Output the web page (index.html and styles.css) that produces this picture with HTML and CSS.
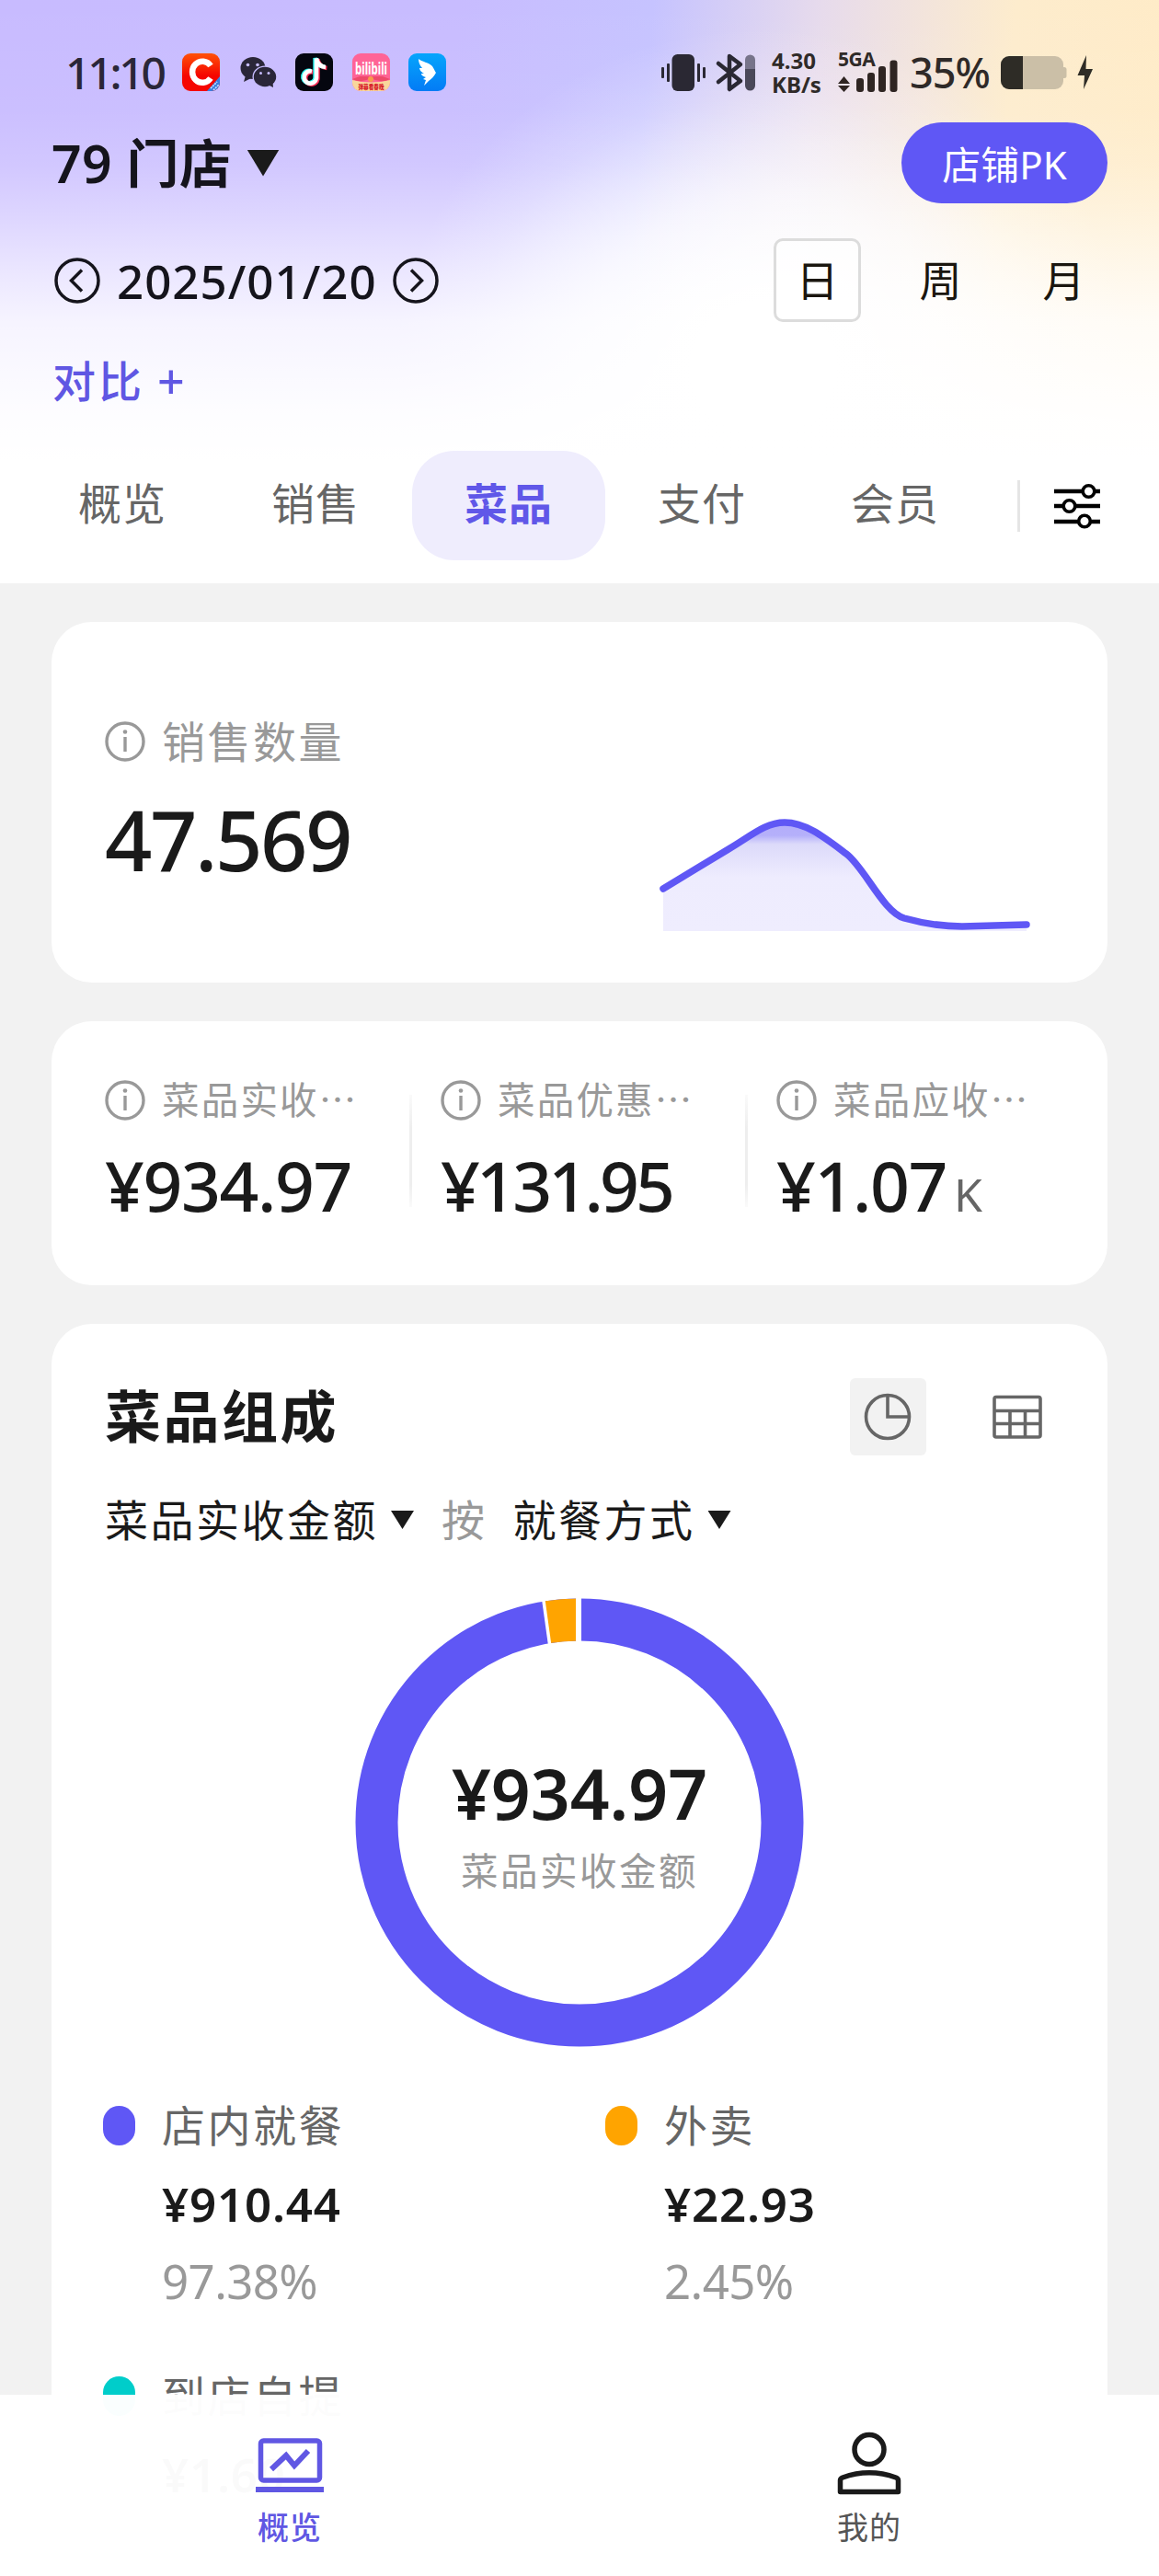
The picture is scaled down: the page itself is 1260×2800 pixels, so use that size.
FILE: index.html
```
<!DOCTYPE html>
<html lang="zh-CN">
<head>
    <meta charset="UTF-8">
    <meta name="viewport" content="width=device-width, initial-scale=1.0">
    <title>菜品概览</title>
    <link rel="stylesheet" href="styles.css">
</head>
<body>
    <header class="header">
        <!-- Status bar -->
        <div class="status-bar">
            <div class="status-left">
                <span class="clock">11:10</span>
                <svg class="app-icon" viewBox="0 0 41 41">
                    <defs>
                        <linearGradient id="red" x1="0" y1="0" x2="0" y2="1">
                            <stop offset="0" stop-color="#ff5208"/>
                            <stop offset="0.6" stop-color="#f50500"/>
                        </linearGradient>
                        <clipPath id="tile"><rect width="41" height="41" rx="9"/></clipPath>
                    </defs>
                    <g clip-path="url(#tile)">
                        <rect width="41" height="41" fill="url(#red)"/>
                        <path d="M27 41L41 25V41Z" fill="#3a7fe0"/>
                        <path d="M31 38L38 31M34 40L40 34" stroke="#cfe2ff" stroke-width="1.6" stroke-dasharray="2 1"/>
                    </g>
                    <path d="M31 13.500A11 11.500 0 1 0 31 27" fill="none" stroke="#fff" stroke-width="6.500"/>
                </svg>
                <svg class="app-icon" viewBox="0 0 41 41">
                    <g fill="#2a2638">
                        <ellipse cx="15" cy="16" rx="13.500" ry="12"/>
                        <path d="M7 24L5 31L13 27Z"/>
                    </g>
                    <ellipse cx="28" cy="25.500" rx="13.500" ry="12" fill="#c8bdff"/>
                    <g fill="#2a2638">
                        <ellipse cx="28" cy="25.500" rx="12.200" ry="10.700"/>
                        <path d="M31 34L37 37L36.500 31Z"/>
                    </g>
                    <g fill="#c8bdff">
                        <circle cx="9.500" cy="12.500" r="1.800"/>
                        <circle cx="20" cy="12.500" r="1.800"/>
                        <circle cx="23.500" cy="21.500" r="1.500"/>
                        <circle cx="32" cy="21.500" r="1.500"/>
                    </g>
                </svg>
                <svg class="app-icon" viewBox="0 0 41 41">
                    <rect width="41" height="41" rx="9" fill="#05060f"/>
                    <g fill="none" stroke-width="4.600">
                        <path d="M18 19.500A6.700 6.700 0 1 0 23 27V5.500C24 11 27 14.500 33 15" stroke="#fe2c55" transform="translate(1.400 1)"/>
                        <path d="M18 19.500A6.700 6.700 0 1 0 23 27V5.500C24 11 27 14.500 33 15" stroke="#25f4ee" transform="translate(-1.400 -0.500)"/>
                        <path d="M18 19.500A6.700 6.700 0 1 0 23 27V5.500C24 11 27 14.500 33 15" stroke="#fff"/>
                    </g>
                </svg>
                <svg class="app-icon" viewBox="0 0 41 41">
                    <g clip-path="url(#tile)">
                        <rect width="41" height="41" fill="#ff6496"/>
                        <path d="M0 29Q20 34 41 29V41H0Z" fill="#f9d79b"/>
                        <path d="M0 28Q10 33 20 27Q31 33 41 28L33 25H8Z" fill="#ee4a6a"/>
                        <circle cx="20" cy="28" r="3" fill="#f79a4c"/>
                    </g>
                    <text x="20.500" y="23" text-anchor="middle" textLength="35" lengthAdjust="spacingAndGlyphs" class="bili">bilibili</text>
                    <text x="20.500" y="38.500" text-anchor="middle" textLength="28" lengthAdjust="spacingAndGlyphs" class="bili-sub">弹幕看春晚</text>
                </svg>
                <svg class="app-icon" viewBox="0 0 41 41">
                    <defs>
                        <linearGradient id="blue" x1="0" y1="0" x2="0" y2="1">
                            <stop offset="0" stop-color="#06a5fc"/>
                            <stop offset="1" stop-color="#037bf5"/>
                        </linearGradient>
                    </defs>
                    <rect width="41" height="41" rx="9" fill="url(#blue)"/>
                    <path d="M11 6C14 9 23 10 26 14C28 17 29 20 30 21C28 25 25 28 22 30L17 35L19 29L16 28L19 26C15 25 14 23 14 22L17 22C13 20 12 17 12 16L15 16C12 13 11 9 11 6Z" fill="#fff"/>
                </svg>
            </div>
            <div class="status-right">
                <svg class="vibrate" viewBox="0 0 48 40">
                    <g fill="#2a2833">
                        <rect x="11.500" width="24.500" height="40" rx="6"/>
                        <rect y="14" width="3" height="12" rx="1"/>
                        <rect x="6" y="10" width="3" height="20" rx="1"/>
                        <rect x="39" y="10" width="3" height="20" rx="1"/>
                        <rect x="45" y="14" width="3" height="12" rx="1"/>
                    </g>
                </svg>
                <svg class="bluetooth" viewBox="0 0 43 40">
                    <path d="M2 10L26 29L14 38V2L26 11L2 30" fill="none" stroke="#2a2833" stroke-width="4.500" stroke-linejoin="round" stroke-linecap="round"/>
                    <path d="M31 16V6a5.500 5.500 0 0 1 11 0V16Z" fill="#77748a"/>
                    <path d="M31 16V34a5.500 5.500 0 0 0 11 0V16Z" fill="#4a4859"/>
                </svg>
                <div class="speed"><span>4.30</span><span>KB/s</span></div>
                <div class="signal">
                    <span class="net-type">5GA</span>
                    <svg viewBox="0 0 65 44">
                        <g fill="#2f2522">
                            <path d="M6.500 26L13 34H0ZM6.500 43L13 36H0Z"/>
                            <rect x="20" y="28" width="8" height="15" rx="3"/>
                            <rect x="32" y="22" width="8" height="21" rx="3"/>
                            <rect x="44" y="15" width="8" height="28" rx="3"/>
                            <rect x="56.500" y="8.500" width="8" height="34.500" rx="3"/>
                        </g>
                    </svg>
                </div>
                <span class="battery-text">35%</span>
                <svg class="battery" viewBox="0 0 102 38">
                    <rect y="1" width="68" height="36" rx="9" fill="#cbbfa7"/>
                    <rect x="66" y="13" width="5.500" height="12" rx="2.500" fill="#cbbfa7"/>
                    <path d="M24 1H9a9 9 0 0 0-9 9V28a9 9 0 0 0 9 9H24Z" fill="#2e2c26"/>
                    <path d="M93 0L83.500 22H91L90 37L100 15H92.500Z" fill="#2e2c26"/>
                </svg>
            </div>
        </div>

        <div class="store-row">
            <div class="store">79 门店 <i class="caret caret-lg"></i></div>
            <button class="pk-btn">店铺PK</button>
        </div>

        <div class="date-row">
            <div class="date">
                <svg viewBox="0 0 50 50"><g fill="none" stroke="#15141c" stroke-width="3.500"><circle cx="25" cy="25" r="23"/><path d="M30 13.500L18.500 25L30 36.500"/></g></svg>
                <span>2025/01/20</span>
                <svg viewBox="0 0 50 50"><g fill="none" stroke="#15141c" stroke-width="3.500"><circle cx="25" cy="25" r="23"/><path d="M20 13.500L31.500 25L20 36.500"/></g></svg>
            </div>
            <div class="period">
                <span class="active">日</span>
                <span>周</span>
                <span>月</span>
            </div>
        </div>

        <div class="compare">对比<span>+</span></div>

        <nav class="tabs">
            <a>概览</a>
            <a>销售</a>
            <a class="active">菜品</a>
            <a>支付</a>
            <a>会员</a>
            <div class="tab-divider"></div>
            <svg class="filter-icon" viewBox="0 0 50 50">
                <g stroke="#000" stroke-width="4.500" fill="#fff">
                    <path d="M0 9H50M0 25H50M0 42H50"/>
                    <circle cx="37.500" cy="9" r="6.300" stroke-width="3.600"/>
                    <circle cx="16.500" cy="25" r="6.300" stroke-width="3.600"/>
                    <circle cx="33" cy="41.500" r="6.300" stroke-width="3.600"/>
                </g>
            </svg>
        </nav>
    </header>

    <main class="content">
        <!-- Sales quantity -->
        <section class="card quantity">
            <div>
                <div class="label">
                    <svg class="info" viewBox="0 0 44 44"><circle cx="22" cy="22" r="20"/><path d="M22 17V33"/><circle class="dot" cx="22" cy="11.500" r="2.300"/></svg>
                    销售数量
                </div>
                <div class="big-value">47.569</div>
            </div>
            <svg class="sparkline" viewBox="0 0 404 124">
                <defs>
                    <linearGradient id="area" x1="0" y1="0" x2="0" y2="1">
                        <stop offset="0" stop-color="#b3adfa"/>
                        <stop offset="0.120" stop-color="#b5b0fa"/>
                        <stop offset="0.200" stop-color="#dcdafa"/>
                        <stop offset="0.500" stop-color="#eeecfe"/>
                        <stop offset="1" stop-color="#efedfe"/>
                    </linearGradient>
                </defs>
                <path d="M5 78L76 35C100 21 116 6 137 6C160 6 180 22 204 40C224 55 244 103 267 110C285 115 305 119 330 119L400 117V124H5Z" fill="url(#area)"/>
                <path d="M5 78L76 35C100 21 116 6 137 6C160 6 180 22 204 40C224 55 244 103 267 110C285 115 305 119 330 119L400 117" fill="none" stroke="#5f57f5" stroke-width="7.500" stroke-linecap="round" stroke-linejoin="round"/>
            </svg>
        </section>

        <!-- Amounts -->
        <section class="card amounts">
            <div class="amount">
                <div class="label small">
                    <svg class="info" viewBox="0 0 44 44"><circle cx="22" cy="22" r="20"/><path d="M22 17V33"/><circle class="dot" cx="22" cy="11.500" r="2.300"/></svg>
                    菜品实收⋯
                </div>
                <div class="value">¥934.97</div>
            </div>
            <div class="amount">
                <div class="label small">
                    <svg class="info" viewBox="0 0 44 44"><circle cx="22" cy="22" r="20"/><path d="M22 17V33"/><circle class="dot" cx="22" cy="11.500" r="2.300"/></svg>
                    菜品优惠⋯
                </div>
                <div class="value tight">¥131.95</div>
            </div>
            <div class="amount">
                <div class="label small">
                    <svg class="info" viewBox="0 0 44 44"><circle cx="22" cy="22" r="20"/><path d="M22 17V33"/><circle class="dot" cx="22" cy="11.500" r="2.300"/></svg>
                    菜品应收⋯
                </div>
                <div class="value">¥1.07<span class="unit">K</span></div>
            </div>
        </section>

        <!-- Composition -->
        <section class="card composition">
            <div class="card-head">
                <h2>菜品组成</h2>
                <div class="view-switch">
                    <span class="view active">
                        <svg viewBox="0 0 54 54"><g fill="none" stroke="#666" stroke-width="3.600"><circle cx="26" cy="27" r="23.500"/><path d="M26 4V27H49"/></g></svg>
                    </span>
                    <span class="view">
                        <svg viewBox="0 0 54 54"><g fill="none" stroke="#666" stroke-width="3.600"><rect x="2" y="5.500" width="50" height="43.500" rx="2"/><path d="M2 20.500H52M2 34.500H52M19 20.500V49M35.500 20.500V49"/></g></svg>
                    </span>
                </div>
            </div>
            <div class="filters">
                <span>菜品实收金额</span><i class="caret"></i>
                <span class="by">按</span>
                <span>就餐方式</span><i class="caret"></i>
            </div>
            <div class="donut">
                <svg viewBox="0 0 488 488">
                    <circle cx="244" cy="244" r="220.500" fill="none" stroke="#5f57f5" stroke-width="46"/>
                    <path d="M205 3.500A243.500 243.500 0 0 1 243 0.500V46.500A197.500 197.500 0 0 0 212 49Z" fill="#ffa400"/>
                    <path d="M204.300 -2L211.800 52" stroke="#fff" stroke-width="3.500"/>
                    <path d="M243 -1V50" stroke="#fff" stroke-width="6"/>
                </svg>
                <div class="donut-center">
                    <div class="donut-value">¥934.97</div>
                    <div class="donut-label">菜品实收金额</div>
                </div>
            </div>
            <div class="legend">
                <div class="legend-item">
                    <i class="dot purple"></i>
                    <div>
                        <p class="name">店内就餐</p>
                        <p class="num">¥910.44</p>
                        <p class="percent">97.38%</p>
                    </div>
                </div>
                <div class="legend-item">
                    <i class="dot orange"></i>
                    <div>
                        <p class="name">外卖</p>
                        <p class="num">¥22.93</p>
                        <p class="percent">2.45%</p>
                    </div>
                </div>
                <div class="legend-item">
                    <i class="dot teal"></i>
                    <div>
                        <p class="name">到店自提</p>
                        <p class="num">¥1.60</p>
                    </div>
                </div>
            </div>
        </section>
    </main>

    <!-- Bottom navigation -->
    <nav class="bottom-nav">
        <a class="active">
            <svg viewBox="0 0 76 76">
                <g fill="none" stroke="#6057e3" stroke-width="5.500">
                    <rect x="6.500" y="12" width="64" height="43" rx="3"/>
                    <path d="M18 43L34 28L43 39L58 23" stroke-width="6"/>
                    <path d="M1 65H75" stroke-width="6"/>
                </g>
            </svg>
            概览
        </a>
        <a>
            <svg viewBox="0 0 76 76">
                <g fill="none" stroke="#1a1a1a" stroke-width="5.500" stroke-linejoin="round">
                    <circle cx="38" cy="21.500" r="16"/>
                    <path d="M6.500 67.500V55Q6.500 53 9 52Q38 41.500 67 52Q69.500 53 69.500 55V67.500Z"/>
                </g>
            </svg>
            我的
        </a>
    </nav>
</body>
</html>
```
FILE: styles.css
```
/* Base */
* {
    box-sizing: border-box;
    margin: 0;
    padding: 0;
}

body {
    width: 1260px;
    height: 2800px;
    overflow: hidden;
    position: relative;
    background: #f2f2f2;
    color: #1a1a1a;
    font-family: "Noto Sans", "Noto Sans CJK SC", sans-serif;
}

svg {
    display: block;
    flex-shrink: 0;
    overflow: visible;
}

/* Header */
.header {
    height: 634px;
    padding-top: 58px;
    background:
        linear-gradient(to bottom, rgba(255, 255, 255, 0) 0, rgba(255, 255, 255, 0.06) 120px, rgba(255, 255, 255, 0.18) 180px, rgba(255, 255, 255, 0.41) 240px, rgba(255, 255, 255, 0.66) 300px, rgba(255, 255, 255, 0.84) 350px, rgba(255, 255, 255, 0.97) 450px, #fff 500px),
        radial-gradient(ellipse 400px 370px at 830px 400px, #fff 20%, rgba(255, 255, 255, 0.7) 50%, rgba(255, 255, 255, 0.2) 80%, rgba(255, 255, 255, 0) 100%),
        linear-gradient(95deg, #c8bbff 0, #c8bcff 38%, #c6c3ff 54%, #e7dbec 68%, #fdeccd 84%, #ffebc6 100%);
}

.status-bar {
    display: flex;
    justify-content: space-between;
    height: 41px;
    padding: 0 70px 0 71px;
}

.status-left,
.status-right {
    display: flex;
    align-items: center;
}

.clock {
    width: 127px;
    font-size: 48px;
    font-weight: 500;
    line-height: 41px;
    letter-spacing: -3.200px;
    color: #2a2638;
}

.app-icon {
    width: 41px;
    height: 41px;
    margin-right: 20.500px;
}

.bili {
    font-size: 18px;
    font-weight: 700;
    fill: #fff;
}

.bili-sub {
    font-size: 7px;
    font-weight: 900;
    fill: #d81e2c;
}

.status-right {
    color: #2f2a28;
}

.vibrate {
    width: 48px;
    height: 40px;
    margin-right: 12px;
}

.bluetooth {
    width: 43px;
    height: 40px;
    margin-right: 17px;
}

.speed {
    width: 72px;
    font-size: 24px;
    font-weight: 700;
    line-height: 26px;
}

.speed span {
    display: block;
}

.signal {
    position: relative;
    width: 65px;
    height: 44px;
    margin-right: 13px;
}

.signal svg {
    width: 65px;
    height: 44px;
}

.net-type {
    position: absolute;
    top: -4px;
    left: 0;
    font-size: 21px;
    font-weight: 700;
    line-height: 22px;
    letter-spacing: -0.500px;
}

.battery-text {
    width: 99px;
    font-size: 45px;
    font-weight: 500;
    line-height: 41px;
    letter-spacing: -1px;
}

.battery {
    width: 102px;
    height: 38px;
}

.store-row {
    display: flex;
    align-items: center;
    justify-content: space-between;
    height: 88px;
    margin-top: 34px;
    padding: 0 56px;
}

.store {
    display: flex;
    align-items: center;
    font-size: 57px;
    font-weight: 600;
    line-height: 84px;
    letter-spacing: 0.500px;
    color: #15141c;
}

.caret {
    width: 25px;
    height: 20px;
    background: #1a1a1a;
    clip-path: polygon(0 0, 100% 0, 50% 100%);
}

.caret-lg {
    width: 35px;
    height: 29px;
    margin-left: 16px;
}

.pk-btn {
    width: 224px;
    height: 88px;
    padding-bottom: 2px;
    border: none;
    border-radius: 44px;
    background: #5f57f5;
    color: #fff;
    font-family: inherit;
    font-size: 42px;
}

.date-row {
    display: flex;
    align-items: center;
    justify-content: space-between;
    height: 91px;
    margin-top: 38px;
    padding: 0 56px 0 59px;
}

.date {
    display: flex;
    align-items: center;
    color: #15141c;
}

.date svg {
    width: 50px;
    height: 50px;
}

.date span {
    width: 318px;
    padding-left: 18px;
    font-size: 51px;
    font-weight: 500;
    line-height: 88px;
    letter-spacing: 1px;
}

.period {
    display: flex;
    gap: 39px;
}

.period span {
    width: 95px;
    height: 91px;
    border-radius: 10px;
    font-size: 46px;
    line-height: 91px;
    text-align: center;
    color: #1a160f;
}

.period .active {
    border: 3px solid #dcdcdc;
    background: rgba(255, 255, 255, 0.6);
    line-height: 85px;
}

.compare {
    display: flex;
    align-items: center;
    height: 60px;
    margin-top: 31px;
    padding-left: 57px;
    font-size: 47px;
    letter-spacing: 3px;
    font-weight: 500;
    color: #6057e3;
}

.compare span {
    margin: 5px 0 0 14px;
    font-size: 52px;
}

.tabs {
    display: flex;
    align-items: center;
    height: 119px;
    margin-top: 49px;
    padding-left: 28px;
}

.tabs a {
    width: 210px;
    height: 119px;
    border-radius: 46px;
    font-size: 47px;
    line-height: 114px;
    letter-spacing: 1px;
    text-align: center;
    color: #666;
}

.tabs .active {
    background: #efedfd;
    color: #6057e8;
    font-weight: 700;
}

.tab-divider {
    width: 3px;
    height: 56px;
    margin-left: 28px;
    background: #e5e5e5;
}

.filter-icon {
    width: 50px;
    height: 50px;
    margin-left: 37px;
}

/* Cards */
.content {
    display: flex;
    flex-direction: column;
    gap: 42px;
    padding: 42px 56px 0;
}

.card {
    border-radius: 44px;
    background: #fff;
}

.label {
    display: flex;
    align-items: center;
    gap: 18px;
    height: 48px;
    font-size: 47px;
    letter-spacing: 2.500px;
    line-height: 48px;
    color: #999;
    white-space: nowrap;
}

.label.small {
    font-size: 40.500px;
    letter-spacing: 2.200px;
}

.info {
    width: 44px;
    height: 44px;
    fill: none;
    stroke: #999;
    stroke-width: 3.400;
}

.info .dot {
    fill: #999;
    stroke: none;
}

.quantity {
    display: flex;
    justify-content: space-between;
    height: 392px;
    padding: 106px 84px 0 58px;
}

.big-value {
    margin-top: 22px;
    font-size: 90px;
    font-weight: 500;
    line-height: 120px;
    letter-spacing: -2.500px;
}

.sparkline {
    width: 404px;
    height: 124px;
    margin-top: 106px;
}

.amounts {
    display: flex;
    height: 287px;
    padding: 62px 0 0 58px;
}

.amount {
    position: relative;
    flex: 0 0 365px;
}

/* Separator fades out at both ends */
.amount + .amount::before {
    content: "";
    position: absolute;
    left: -34px;
    top: 18px;
    width: 3px;
    height: 122px;
    background: linear-gradient(to bottom, #fafafa, #eee 30%, #eee 80%, #fafafa);
}

.amount:last-child {
    flex-basis: 300px;
}

.value {
    margin-top: 18px;
    font-size: 75px;
    font-weight: 500;
    line-height: 100px;
    letter-spacing: -1.400px;
    white-space: nowrap;
}

.value.tight {
    letter-spacing: -3.800px;
}

.unit {
    margin-left: 8px;
    font-size: 50px;
    font-weight: 400;
    color: #666;
}

.composition {
    height: 1400px;
    padding: 59px 58px 0;
}

.card-head {
    display: flex;
    align-items: center;
    justify-content: space-between;
    height: 84px;
}

h2 {
    font-size: 61px;
    font-weight: 700;
    line-height: 84px;
    letter-spacing: 2.500px;
}

.view-switch {
    display: flex;
    gap: 57px;
    margin-right: -1px;
}

.view {
    display: flex;
    align-items: center;
    justify-content: center;
    width: 83px;
    height: 84px;
    border-radius: 6px;
}

.view.active {
    background: #f2f2f2;
}

.view svg {
    width: 54px;
    height: 54px;
}

.filters {
    display: flex;
    align-items: center;
    height: 60px;
    margin-top: 40px;
    font-size: 47px;
    letter-spacing: 2.500px;
    line-height: 60px;
}

.filters .caret {
    margin-left: 14px;
}

.filters .by {
    margin: 0 28px 0 30px;
    color: #999;
}

.donut {
    position: relative;
    width: 488px;
    height: 488px;
    margin: 55px auto 0;
}

.donut-center {
    position: absolute;
    top: 0;
    left: 0;
    width: 100%;
    padding-top: 162px;
    text-align: center;
}

.donut-value {
    font-size: 75px;
    font-weight: 600;
    line-height: 100px;
    letter-spacing: 0;
}

.donut-label {
    margin-top: 10px;
    font-size: 40.500px;
    letter-spacing: 2.500px;
    line-height: 50px;
    color: #999;
}

.legend {
    display: grid;
    grid-template-columns: 546px 1fr;
    grid-auto-rows: 294px;
    margin: 53px -10px 0 -2px;
}

.legend-item {
    display: flex;
    gap: 29px;
}

.legend-item .dot {
    width: 35px;
    height: 43px;
    margin-top: 11px;
    border-radius: 17.500px;
}

.purple {
    background: #5f57f5;
}

.orange {
    background: #ffa400;
}

.teal {
    background: #00cdca;
}

.name {
    padding-top: 1px;
    font-size: 47px;
    letter-spacing: 2.500px;
    line-height: 62px;
    color: #666;
}

.num {
    margin-top: 21px;
    font-size: 51px;
    font-weight: 600;
    line-height: 66px;
    letter-spacing: 0.800px;
}

.percent {
    margin-top: 18px;
    font-size: 51px;
    line-height: 66px;
    letter-spacing: -0.600px;
    color: #999;
}

/* Bottom navigation */
.bottom-nav {
    position: absolute;
    left: 0;
    bottom: 0;
    display: flex;
    width: 1260px;
    height: 197px;
    background: rgba(255, 255, 255, 0.98);
}

.bottom-nav a {
    display: flex;
    flex-direction: column;
    align-items: center;
    width: 630px;
    padding-top: 38px;
    font-size: 34px;
    letter-spacing: 1px;
    line-height: 56px;
    color: #555;
}

.bottom-nav .active {
    color: #6057e3;
    font-weight: 500;
}

.bottom-nav svg {
    width: 76px;
    height: 76px;
    margin-bottom: 2px;
}
```
